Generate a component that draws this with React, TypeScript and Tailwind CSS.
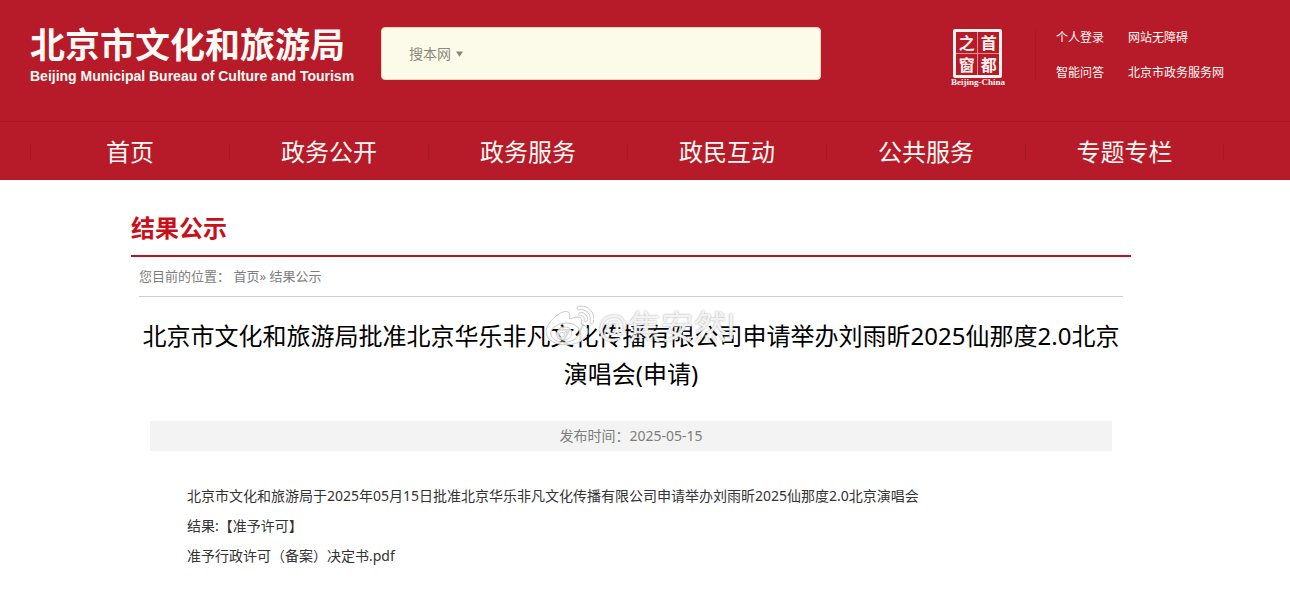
import { FaWeibo } from "react-icons/fa";

const NAV_ITEMS = ["首页", "政务公开", "政务服务", "政民互动", "公共服务", "专题专栏"];

const QUICK_LINKS = ["个人登录", "网站无障碍", "智能问答", "北京市政务服务网"];

function Emblem() {
  return (
    <a href="#" aria-label="首都之窗" className="flex w-[54px] flex-col items-center gap-px text-[#fdf3ee]">
      <span className="grid size-[49px] grid-cols-2 grid-rows-2 rounded-[2px] border-3 border-[#fdf3ee] font-['Noto_Sans_CJK_SC','Noto_Sans',sans-serif] text-[16px] leading-5 font-bold">
        <span className="border-r border-b border-[#e08d8d] text-center">之</span>
        <span className="border-b border-[#e08d8d] text-center">首</span>
        <span className="border-r border-[#e08d8d] text-center">窗</span>
        <span className="text-center">都</span>
      </span>
      <span className="font-['Liberation_Serif',serif] text-[9px] leading-[7px] font-bold whitespace-nowrap">
        Beijing-China
      </span>
    </a>
  );
}

function Header() {
  return (
    <header className="bg-[#b71a28] text-[#fffaf5]">
      <div className="flex h-[122px] items-start border-b border-[#a91624] pt-[27px] pr-[66px] pl-[30px]">
        <a href="#" className="block w-[351px] shrink-0 whitespace-nowrap">
          <span className="block text-[35px] leading-9 font-bold">北京市文化和旅游局</span>
          <span className="block font-['Liberation_Sans',Arial,sans-serif] text-[14px] leading-[26px] font-bold">
            Beijing Municipal Bureau of Culture and Tourism
          </span>
        </a>

        <form
          className="flex h-[53px] max-w-[440px] flex-1 items-center rounded-[4px] border border-[#e9d6b4] bg-[#fcfbe9] pl-[27px]"
          onSubmit={(e) => e.preventDefault()}
        >
          <label className="relative flex items-center text-[14px] text-[#8a8a7c]">
            <select aria-label="搜索范围" className="w-[60px] appearance-none bg-transparent outline-none">
              <option>搜本网</option>
            </select>
            <svg viewBox="0 0 8 6" className="pointer-events-none absolute left-[47px] h-[6px] w-[7px]" aria-hidden="true">
              <path d="M0 0h8L4 6z" fill="#85857a" />
            </svg>
          </label>
          <input type="text" aria-label="搜索" className="h-full min-w-0 flex-1 bg-transparent px-3 text-[14px] text-gray-700 outline-none" />
        </form>

        <div className="ml-auto flex pt-[2px]">
          <Emblem />
          <div className="ml-[30px] h-[52px] w-px bg-[#ad1725]" />
          <ul className="ml-5 grid grid-cols-[72px_auto] content-start gap-y-[17px] text-[12px] leading-[18px]">
            {QUICK_LINKS.map((link) => (
              <li key={link}>
                <a href="#" className="hover:underline">{link}</a>
              </li>
            ))}
          </ul>
        </div>
      </div>

      <nav className="pr-[66px] pl-[30px]">
        <ul className="grid h-[58px] grid-cols-6 items-center pt-px text-center text-[24px]">
          {NAV_ITEMS.map((item) => (
            <li key={item} className="border-l border-[#a91624] leading-4 last:border-r">
              <a href="#">{item}</a>
            </li>
          ))}
        </ul>
      </nav>
    </header>
  );
}

function Watermark() {
  return (
    <div
      aria-hidden="true"
      className="pointer-events-none absolute top-[6px] left-[407px] flex items-center gap-1 text-[33px] leading-10 whitespace-nowrap text-white/85 [text-shadow:0_0_2px_#999]"
    >
      <FaWeibo className="size-12 stroke-[#c4c4c4] [stroke-width:10]" />
      <span>@焦安然l</span>
    </div>
  );
}

export default function App() {
  return (
    <div className="min-h-screen bg-white font-['Noto_Sans','Noto_Sans_CJK_SC',sans-serif]">
      <Header />
      <div className="pr-7">
        <main className="mx-auto max-w-[1000px] pt-[30px]">
          <h2 className="border-b-2 border-[#b9141f] pb-[9px] text-[24px] leading-9 font-bold text-[#cb0f18]">结果公示</h2>

          <div className="px-2">
            <div className="border-b border-[#cfcfcf] text-[13px] leading-[39px] text-[#7d7d7d]">
              您目前的位置： <a href="#">首页</a>» <a href="#">结果公示</a>
            </div>

            <article className="relative">
              <h1 className="pt-5 text-center text-[24px] leading-[38px] text-black">
                北京市文化和旅游局批准北京华乐非凡文化传播有限公司申请举办刘雨昕2025仙那度2.0北京演唱会(申请)
              </h1>
              <Watermark />

              <p className="mx-[11px] mt-7 bg-[#f3f3f3] text-center text-[14px] leading-[30px] text-[#7d7d7d]">
                发布时间：2025-05-15
              </p>

              <div className="px-12 pt-[30px] text-[14px] leading-[30px] text-[#333]">
                <p>北京市文化和旅游局于2025年05月15日批准北京华乐非凡文化传播有限公司申请举办刘雨昕2025仙那度2.0北京演唱会</p>
                <p>结果:【准予许可】</p>
                <p>
                  <a href="#">准予行政许可（备案）决定书.pdf</a>
                </p>
              </div>
            </article>
          </div>
        </main>
      </div>
    </div>
  );
}
